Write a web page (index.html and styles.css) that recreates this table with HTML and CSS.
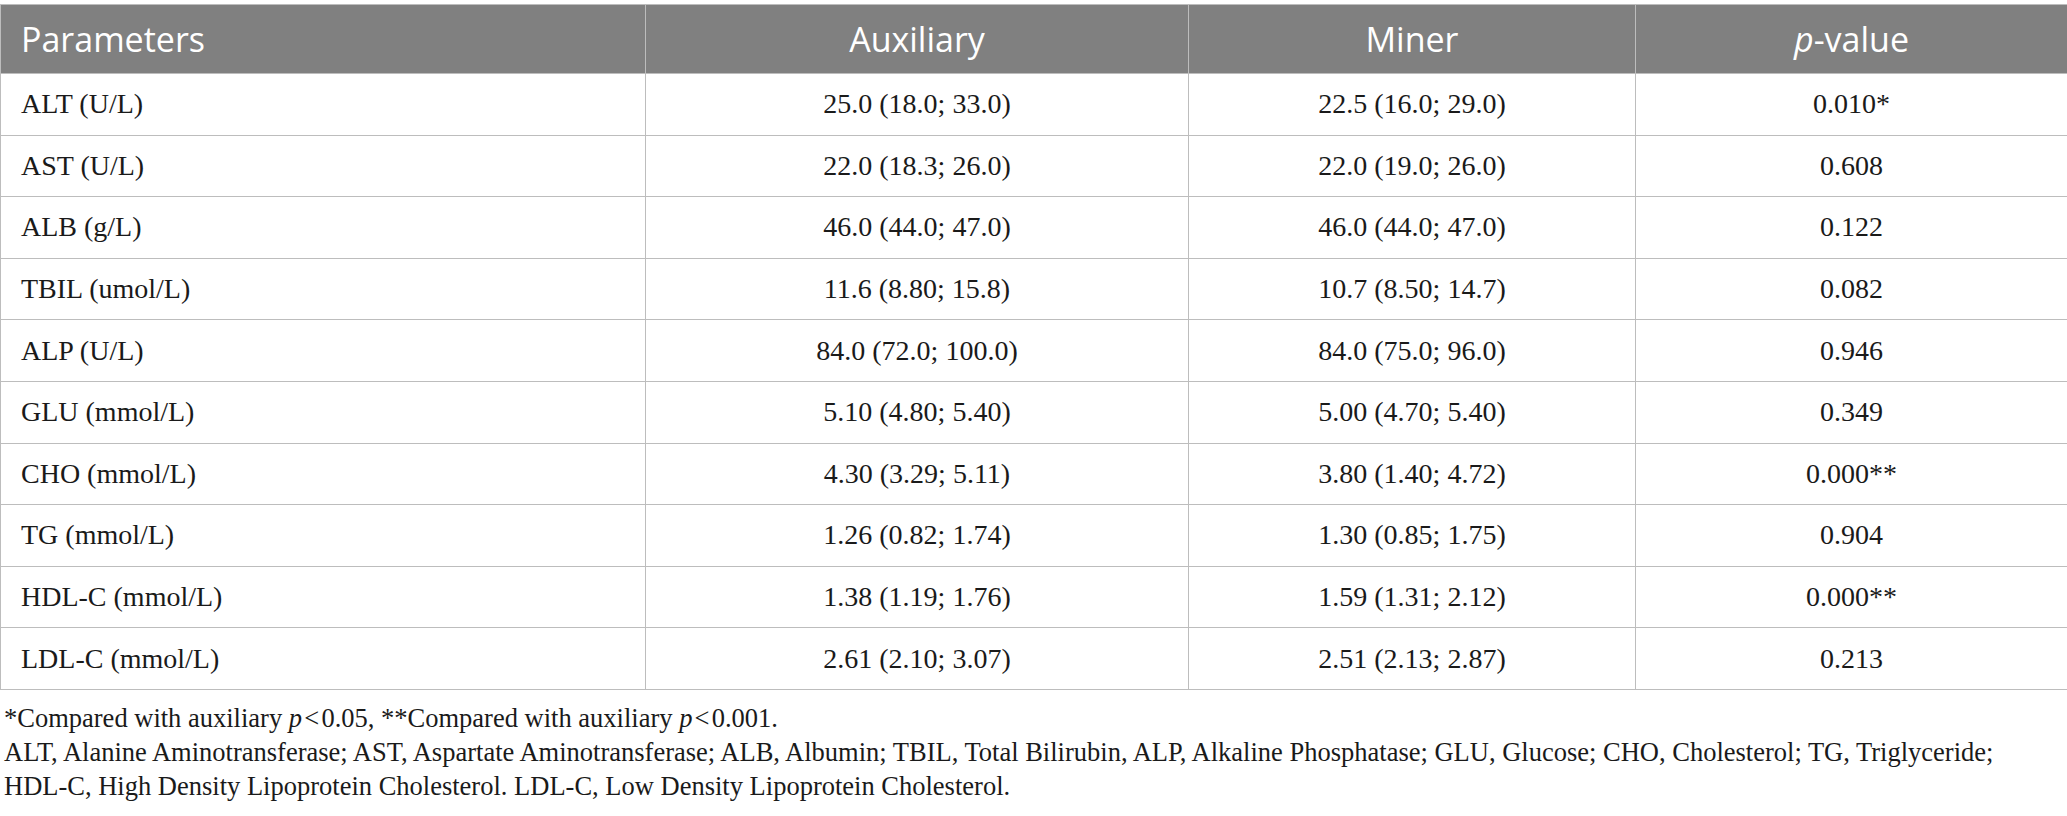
FILE: index.html
```html
<!DOCTYPE html>
<html lang="en">
<head>
  <meta charset="UTF-8" />
  <title>Liver function and lipid parameters</title>
  <link rel="stylesheet" href="styles.css">
</head>
<body>
  <table class="data">
    <colgroup>
      <col class="c-param">
      <col class="c-aux">
      <col class="c-miner">
      <col class="c-p">
    </colgroup>
    <thead>
      <tr>
        <th class="left">Parameters</th>
        <th>Auxiliary</th>
        <th>Miner</th>
        <th><i>p</i>-value</th>
      </tr>
    </thead>
    <tbody>
      <tr><td class="left">ALT (U/L)</td><td>25.0 (18.0; 33.0)</td><td>22.5 (16.0; 29.0)</td><td>0.010*</td></tr>
      <tr><td class="left">AST (U/L)</td><td>22.0 (18.3; 26.0)</td><td>22.0 (19.0; 26.0)</td><td>0.608</td></tr>
      <tr><td class="left">ALB (g/L)</td><td>46.0 (44.0; 47.0)</td><td>46.0 (44.0; 47.0)</td><td>0.122</td></tr>
      <tr><td class="left">TBIL (umol/L)</td><td>11.6 (8.80; 15.8)</td><td>10.7 (8.50; 14.7)</td><td>0.082</td></tr>
      <tr><td class="left">ALP (U/L)</td><td>84.0 (72.0; 100.0)</td><td>84.0 (75.0; 96.0)</td><td>0.946</td></tr>
      <tr><td class="left">GLU (mmol/L)</td><td>5.10 (4.80; 5.40)</td><td>5.00 (4.70; 5.40)</td><td>0.349</td></tr>
      <tr><td class="left">CHO (mmol/L)</td><td>4.30 (3.29; 5.11)</td><td>3.80 (1.40; 4.72)</td><td>0.000**</td></tr>
      <tr><td class="left">TG (mmol/L)</td><td>1.26 (0.82; 1.74)</td><td>1.30 (0.85; 1.75)</td><td>0.904</td></tr>
      <tr><td class="left">HDL-C (mmol/L)</td><td>1.38 (1.19; 1.76)</td><td>1.59 (1.31; 2.12)</td><td>0.000**</td></tr>
      <tr><td class="left">LDL-C (mmol/L)</td><td>2.61 (2.10; 3.07)</td><td>2.51 (2.13; 2.87)</td><td>0.213</td></tr>
    </tbody>
  </table>
  <div class="notes">
    <p>*Compared with auxiliary <i>p</i>&#8202;&lt;&#8202;0.05, **Compared with auxiliary <i>p</i>&#8202;&lt;&#8202;0.001.</p>
    <p>ALT, Alanine Aminotransferase; AST, Aspartate Aminotransferase; ALB, Albumin; TBIL, Total Bilirubin, ALP, Alkaline Phosphatase; GLU, Glucose; CHO, Cholesterol; TG, Triglyceride;</p>
    <p>HDL-C, High Density Lipoprotein Cholesterol. LDL-C, Low Density Lipoprotein Cholesterol.</p>
  </div>
</body>
</html>
```

FILE: styles.css
```css
* {
  box-sizing: border-box;
}
body {
  margin: 0;
  padding-top: 4px;
  background-color: #ffffff;
  font-family: "Liberation Serif", "Times New Roman", serif;
  color: #1a1a1a;
}
.data {
  width: 2067px;
  border-collapse: collapse;
  table-layout: fixed;
}
.c-param { width: 645px; }
.c-aux { width: 543px; }
.c-miner { width: 447px; }
.c-p { width: 432px; }
.data th {
  background-color: #808080;
  color: #ffffff;
  font-family: "Open Sans", "Noto Sans", sans-serif;
  font-weight: 400;
  font-size: 34px;
  height: 69px;
  padding: 0 20px;
  text-align: center;
  border: 1px solid #bdbdbd;
}
.data td {
  height: 61.6px;
  padding: 0 20px;
  font-size: 28px;
  text-align: center;
  border: 1px solid #bdbdbd;
}
.data .left {
  text-align: left;
}
.notes {
  padding: 11px 4px 0;
  font-size: 26.5px;
  line-height: 34px;
}
.notes p {
  margin: 0;
}
```
